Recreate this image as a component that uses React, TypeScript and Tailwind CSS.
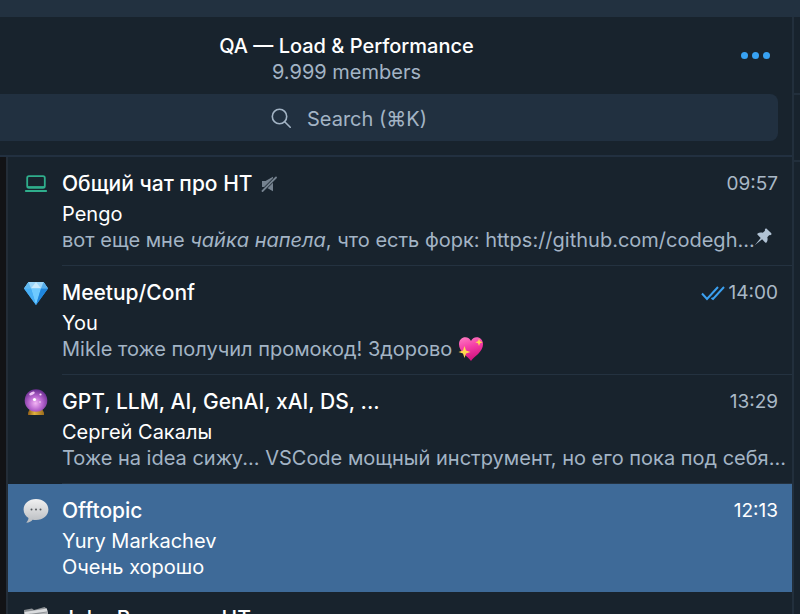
import type { ReactNode } from "react";

type Topic = {
  icon: ReactNode;
  title: string;
  author: string;
  message: ReactNode;
  time: string;
  muted?: boolean;
  pinned?: boolean;
  read?: boolean;
  selected?: boolean;
};

function LaptopIcon() {
  return (
    <svg viewBox="0 0 26 24" className="h-6 w-[26px]" fill="none" aria-hidden="true">
      <rect x="4.2" y="4.2" width="17.6" height="11.6" rx="1.8" stroke="#2fae8c" strokeWidth="1.8" />
      <path d="M4.500 14.800h17" stroke="#2fae8c" strokeWidth="1.400" />
      <path d="M2.8 19h20.400" stroke="#2fae8c" strokeWidth="1.8" strokeLinecap="round" />
    </svg>
  );
}

function GemIcon() {
  return (
    <svg viewBox="0 0 26 26" className="size-[26px]" aria-hidden="true">
      <path d="M5.5 2h15L25 8.5 13 25 1 8.5z" fill="#3ba6f2" />
      <path d="M5.5 2h15L25 8.5H1z" fill="#9bd5f8" />
      <path d="M5.5 2 8 8.5H1z" fill="#5fb7ee" />
      <path d="M20.5 2 25 8.5h-7z" fill="#57aeea" />
      <path d="m13 2 5 6.5H8z" fill="#c9eafc" />
      <path d="M8 8.500h10L13 25z" fill="#6fcaff" />
      <path d="M18 8.500h7L13 25z" fill="#1f86dd" />
      <path d="M1 8.500h7L13 25z" fill="#48aff5" />
    </svg>
  );
}

function CrystalBallIcon() {
  return (
    <svg viewBox="0 0 26 28" className="h-7 w-[26px]" aria-hidden="true">
      <defs>
        <radialGradient id="ball" cx="0.48" cy="0.62" r="0.6">
          <stop offset="0" stopColor="#f3b4f4" />
          <stop offset="0.5" stopColor="#b866cf" />
          <stop offset="1" stopColor="#6c2f92" />
        </radialGradient>
        <linearGradient id="stand" x1="0" x2="1" y1="0" y2="0">
          <stop offset="0" stopColor="#8a5a18" />
          <stop offset="0.4" stopColor="#e0b23e" />
          <stop offset="1" stopColor="#9a6a1c" />
        </linearGradient>
      </defs>
      <path d="M7 21h12l2 3.500v2.500H5v-2.500z" fill="url(#stand)" />
      <circle cx="13" cy="12.500" r="11.300" fill="url(#ball)" />
      <ellipse cx="9" cy="5.500" rx="3" ry="1.500" fill="#eec3f5" transform="rotate(-25 9 5.500)" />
      <circle cx="17.500" cy="6.500" r="1.100" fill="#f9dcfb" />
      <circle cx="11.500" cy="11.500" r="1.600" fill="#fff" />
      <circle cx="17" cy="14" r="0.700" fill="#fff" />
    </svg>
  );
}

function SpeechIcon() {
  return (
    <svg viewBox="0 0 26 26" className="size-[26px]" aria-hidden="true">
      <defs>
        <linearGradient id="bubble" x1="0" x2="0" y1="0" y2="1">
          <stop offset="0" stopColor="#f1f1f1" />
          <stop offset="1" stopColor="#b9bcc0" />
        </linearGradient>
      </defs>
      <path
        d="M13 1C6 1 .6 5.300.6 11.500c0 4 2.100 6.800 4.900 8.600-.2 2-1 3.300-2.200 4.600 2.900-.1 5-1.300 6.300-3 1.100.2 2.200.3 3.400.3 7 0 12.400-4.300 12.400-10.500S20 1 13 1z"
        fill="url(#bubble)"
      />
      <g fill="#55585c">
        <circle cx="8.500" cy="11.500" r="1" />
        <circle cx="13" cy="11.500" r="1" />
        <circle cx="17.500" cy="11.500" r="1" />
      </g>
    </svg>
  );
}

function DividersIcon() {
  return (
    <svg viewBox="0 0 26 26" className="size-[26px]" aria-hidden="true">
      <path d="M1 4 9 2.500l2 1.500 10.500-3 2 1.500L25 5v20H1z" fill="#8d9195" />
      <path d="M1.500 6 24 2.500v3L2 8.500z" fill="#d9dbdd" />
      <path d="M1 8.500 8 7.500l2 1.500 15-3v19H1z" fill="#b3b6b9" />
    </svg>
  );
}

function SparklingHeart() {
  return (
    <svg viewBox="0 0 26 26" className="size-[26px] shrink-0" role="img" aria-label="sparkling heart">
      <defs>
        <linearGradient id="heart" x1="0" x2="0.300" y1="0" y2="1">
          <stop offset="0" stopColor="#ff7fc4" />
          <stop offset="0.500" stopColor="#f43ca6" />
          <stop offset="1" stopColor="#d3157f" />
        </linearGradient>
      </defs>
      <path
        d="M13 25C10 20.500 1 16 1 8.200 1 4 4 1.300 7.300 1.300c2.600 0 4.700 1.400 5.700 3.700 1-2.300 3.100-3.700 5.700-3.700C22 1.300 25 4 25 8.200 25 16 16 20.500 13 25z"
        fill="url(#heart)"
      />
      <path d="m6.500 10 1.500 4.500 4.500 1.500L8 17.500 6.500 22 5 17.500.5 16 5 14.500z" fill="#ffd84f" />
      <path d="m21 2.500 1 2.700 2.700 1-2.700 1-1 2.700-1-2.700-2.700-1 2.700-1z" fill="#ffd84f" />
    </svg>
  );
}

function MutedIcon() {
  return (
    <svg viewBox="0 0 16 16" className="size-4 shrink-0" role="img" aria-label="Muted">
      <path d="M1 5h3.500L12 .8v14.400L4.500 11H1z" fill="#75828f" />
      <path d="M1.500 15 15 1.500" stroke="#18232d" strokeWidth="3.200" />
      <path d="M1.500 15 15 1.500" stroke="#75828f" strokeWidth="1.800" strokeLinecap="round" />
    </svg>
  );
}

function PinIcon() {
  return (
    <svg viewBox="0 0 18 18" className="size-[18px]" role="img" aria-label="Pinned">
      <path
        d="M11.200.9c.5-.5 1.200-.5 1.700 0l4.200 4.200c.5.5.5 1.200 0 1.700-.5.400-1.200.5-1.800.2l-2 2.200c.6 2 .3 3.900-.8 5.200-.4.400-.9.400-1.300 0l-3.100-3.100L.8 17.200l5.900-7.300-3.100-3.100c-.4-.4-.4-.9 0-1.300 1.300-1.100 3.200-1.400 5.200-.8l2.200-2c-.3-.6-.2-1.300.2-1.800z"
        fill="#b1c3d5"
      />
    </svg>
  );
}

function ReadIcon() {
  return (
    <svg viewBox="0 0 24 16" className="h-4 w-6" fill="none" stroke="#3ba0f0" strokeWidth="2" role="img" aria-label="Read">
      <path d="m1 8.500 5 5.500L17 2" />
      <path d="m10.500 13 1.500 1L23 2" />
    </svg>
  );
}

const topics: Topic[] = [
  {
    icon: <LaptopIcon />,
    title: "Общий чат про НТ",
    author: "Pengo",
    message: (
      <>
        вот еще мне <em>чайка напела</em>, что есть форк: https://github.com/codegh...
      </>
    ),
    time: "09:57",
    muted: true,
    pinned: true,
  },
  {
    icon: <GemIcon />,
    title: "Meetup/Conf",
    author: "You",
    message: (
      <span className="flex items-center gap-[6px]">
        Mikle тоже получил промокод! Здорово <SparklingHeart />
      </span>
    ),
    time: "14:00",
    read: true,
  },
  {
    icon: <CrystalBallIcon />,
    title: "GPT, LLM, AI, GenAI, xAI, DS, ...",
    author: "Сергей Сакалы",
    message: "Тоже на idea сижу... VSCode мощный инструмент, но его пока под себя...",
    time: "13:29",
  },
  {
    icon: <SpeechIcon />,
    title: "Offtopic",
    author: "Yury Markachev",
    message: "Очень хорошо",
    time: "12:13",
    selected: true,
  },
  {
    icon: <DividersIcon />,
    title: "Jobs Вакансии НТ",
    author: "",
    message: "",
    time: "",
  },
];

function TopicRow({ topic }: { topic: Topic }) {
  const selected = topic.selected;
  return (
    <li>
      <button
        type="button"
        aria-current={selected ? "true" : undefined}
        className={`flex w-full text-left ${selected ? "h-[108px] bg-[#3e6a98]" : "h-[109px] bg-[#18232d]"}`}
      >
        <span className="flex h-[54px] w-[54px] shrink-0 items-center pl-[15px]">{topic.icon}</span>
        <span
          className={`flex h-full min-w-0 grow flex-col border-b pt-[11px] ${selected ? "border-transparent" : "border-[#243240]"}`}
        >
          <span className="flex h-8 items-center gap-2 pr-[14px]">
            <span className="truncate text-[21px] font-medium text-white">{topic.title}</span>
            {topic.muted && <MutedIcon />}
            <span className={`ml-auto flex items-center gap-1 text-[19px] ${selected ? "text-white" : "text-[#a9b8c6]"}`}>
              {topic.read && <ReadIcon />}
              {topic.time}
            </span>
          </span>
          <span className="block h-7 text-[20px] leading-7 text-white">{topic.author}</span>
          <span
            className={`flex h-6 items-center text-[20px] leading-6 ${selected ? "text-white" : "text-[#a3b4c5]"}`}
          >
            <span className="min-w-0 grow whitespace-nowrap">{topic.message}</span>
            {topic.pinned && (
              <span className="flex w-[38px] shrink-0 pb-[6px]">
                <PinIcon />
              </span>
            )}
          </span>
        </span>
      </button>
    </li>
  );
}

export default function App() {
  return (
    <div className="flex h-screen flex-col overflow-hidden bg-[#18232d] font-['Inter','Noto_Sans',sans-serif]">
      <div className="h-[17px] shrink-0 bg-[#223140]" />
      <div className="flex min-h-0 grow">
        <main className="flex min-w-0 grow flex-col">
          <header className="shrink-0 border-b-2 border-[#223040] pb-[14px]">
            <div className="flex h-[77px] items-center">
              <div className="min-w-0 grow pt-[6px] text-center">
                <h1 className="text-[20px] leading-[26px] font-medium text-white">QA — Load &amp; Performance</h1>
                <p className="text-[20px] leading-[26px] text-[#a3b4c5]">9.999 members</p>
              </div>
              <button type="button" aria-label="More" className="flex w-[99px] shrink-0 items-center gap-1 pl-[48px]">
                <span className="size-[7px] rounded-full bg-[#37a1f2]" />
                <span className="size-[7px] rounded-full bg-[#37a1f2]" />
                <span className="size-[7px] rounded-full bg-[#37a1f2]" />
              </button>
            </div>
            <label className="mr-[14px] flex h-[47px] items-center justify-center gap-4 rounded-r-lg bg-[#213040] pr-20">
              <svg viewBox="0 0 20 20" className="size-5" fill="none" stroke="#a3b4c5" strokeWidth="1.600" aria-hidden="true">
                <circle cx="8.500" cy="8.500" r="7.200" />
                <path d="m13.700 13.700 5.500 5.500" strokeLinecap="round" />
              </svg>
              <input
                type="text"
                aria-label="Search"
                placeholder="Search (⌘K)"
                className="h-8 w-[120px] bg-transparent pt-[2px] text-[20px] outline-none placeholder:text-[#a3b4c5]"
              />
            </label>
          </header>
          <div className="flex min-h-0 grow">
            <div className="w-2 shrink-0 border-r-2 border-[#232d38] bg-[#121316]" />
            <ul className="min-w-0 grow overflow-hidden">
              {topics.map((topic) => (
                <TopicRow key={topic.title} topic={topic} />
              ))}
            </ul>
          </div>
        </main>
        <aside className="w-2 shrink-0 border-l-2 border-[#222f3c]">
          <div className="h-[78px] border-b-2 border-[#222f3c]" />
          <div className="h-[67px] border-b-2 border-[#222f3c]" />
        </aside>
      </div>
    </div>
  );
}
